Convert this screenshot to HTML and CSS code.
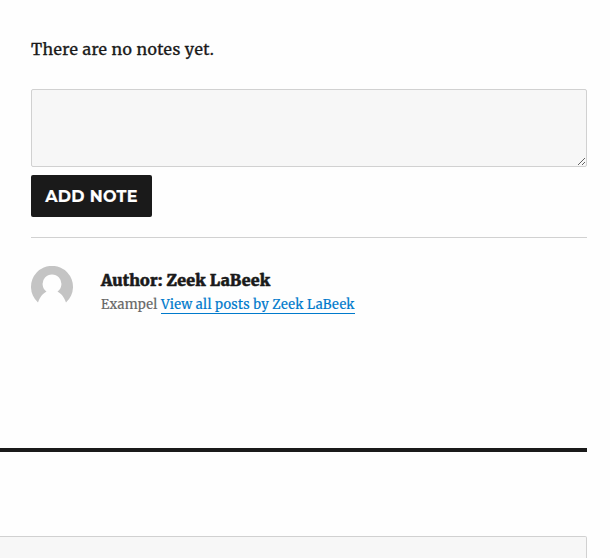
FILE: index.html
```html
<!DOCTYPE html>
<html lang="en">
<head>
<meta charset="utf-8">
<title>Notes</title>
<link rel="stylesheet" href="styles.css">
</head>
<body>
<main class="notes">
  <p class="empty">There are no notes yet.</p>
  <textarea class="note-input" aria-label="Note"></textarea>
  <button class="add-note" type="button">Add note</button>
  <section class="author">
    <svg class="avatar" viewBox="0 0 42 42" aria-hidden="true">
      <path fill="#c4c4c4" fill-rule="evenodd" d="M7 36.500A21 21 0 1 1 35 36.500C33 31 30.500 27.800 26.500 25.500A9.400 9.400 0 1 0 15.500 25.500C11.500 27.800 9 31 7 36.500Z"/>
    </svg>
    <div class="bio">
      <h2 class="author-name">Author: Zeek LaBeek</h2>
      <p class="author-text">Exampel <a class="author-link" href="#">View all posts by Zeek LaBeek</a></p>
    </div>
  </section>
</main>
<section class="comments">
  <div class="comment-input"></div>
</section>
</body>
</html>
```
FILE: styles.css
```css
* { box-sizing: border-box; }
body {
  margin: 0;
  height: 558px;
  overflow: hidden;
  background: #fefefe;
  color: #1a1a1a;
  font-family: Merriweather, "DejaVu Serif Condensed", "DejaVu Serif", serif;
}
.notes {
  height: 448px;
  padding: 35px 23px 0 31px;
}
.empty {
  margin: 0 0 26px;
  font-size: 16px;
  letter-spacing: 0.4px;
  line-height: 28px;
  white-space: nowrap;
  -webkit-text-stroke: 0.3px currentColor;
}
.note-input {
  display: block;
  width: 100%;
  height: 78px;
  border: 1px solid #d1d1d1;
  border-radius: 2px;
  background: #f7f7f7;
  resize: vertical;
}
.add-note {
  display: block;
  width: 121px;
  height: 42px;
  margin: 8px 0 20px;
  padding: 1px 0 0;
  border: 0;
  border-radius: 2px;
  background: #1a1a1a;
  color: #fff;
  font: 700 16px/41px Montserrat, Inter, sans-serif;
  letter-spacing: 0.3px;
  text-transform: uppercase;
  white-space: nowrap;
  -webkit-text-stroke: 0.2px currentColor;
}
.author {
  display: flex;
  gap: 28px;
  padding-top: 28px;
  border-top: 1px solid #d1d1d1;
}
.avatar {
  flex: none;
  width: 42px;
  height: 42px;
}
.bio { white-space: nowrap; }
.author-name {
  margin: 0;
  font-size: 16px;
  font-weight: 900;
  letter-spacing: 0.14px;
  line-height: 28px;
  -webkit-text-stroke: 0.5px currentColor;
}
.author-text {
  margin: 1px 0 0;
  color: #686868;
  font-size: 13px;
  letter-spacing: 0.24px;
  line-height: 20px;
  -webkit-text-stroke: 0.15px currentColor;
}
.author-link {
  color: #007acc;
  text-decoration: none;
  box-shadow: 0 1px 0 0 currentColor;
}
.comments {
  margin-right: 23px;
  padding-top: 84px;
  border-top: 4px solid #1a1a1a;
}
.comment-input {
  height: 40px;
  border: 1px solid #d1d1d1;
  border-left: 0;
  border-radius: 0 2px 0 0;
  background: #f7f7f7;
}
```
